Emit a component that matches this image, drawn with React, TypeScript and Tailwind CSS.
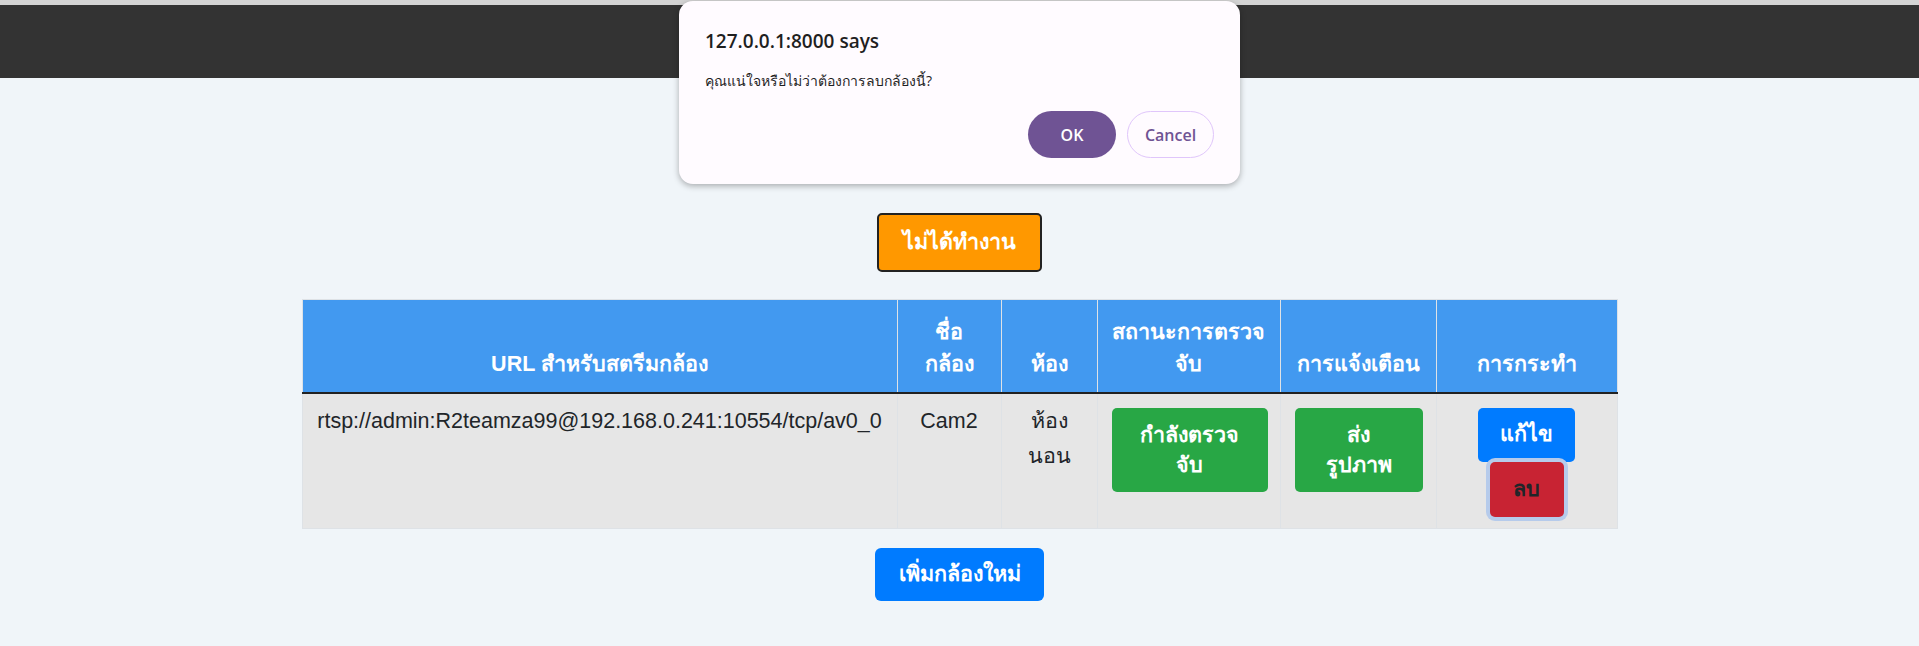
export default function App() {
  const th =
    "border border-[#dee2e6] border-b-2 border-b-[#222] align-bottom pb-3 px-[14px] text-center text-white font-bold text-[21.5px] leading-[32px]";
  const td = "border border-[#dee2e6] align-top text-center px-[14px]";

  return (
    <div
      className="relative h-[646px] overflow-hidden bg-[#f0f5f9] text-[#212529]"
      style={{ fontFamily: '"Liberation Sans", Arial, sans-serif' }}
    >
      <div className="h-[78px] border-t-[5px] border-[#d4d4d4] bg-[#333333]" />

      <main className="flex flex-col items-center">
        <button className="mt-[135px] h-[59px] w-[165px] rounded-[5px] border-2 border-[#222] bg-[#ff9800] text-[21.5px] font-bold text-white">
          ไม่ได้ทำงาน
        </button>

        <table className="mt-[27px] w-[1315px] table-fixed border-collapse">
          <thead>
            <tr className="bg-[#4299f0]">
              <th className={th + " w-[595px] h-[93px]"}>URL สำหรับสตรีมกล้อง</th>
              <th className={th + " w-[104px]"}>ชื่อ กล้อง</th>
              <th className={th + " w-[96px]"}>ห้อง</th>
              <th className={th + " w-[183px]"}>สถานะการตรวจ จับ</th>
              <th className={th + " w-[156px]"}>การแจ้งเตือน</th>
              <th className={th + " w-[181px]"}>การกระทำ</th>
            </tr>
          </thead>
          <tbody>
            <tr className="h-[136px] bg-[#e6e6e6] text-[21.5px]">
              <td className={td + " pt-[10px] leading-[35px]"}>
                rtsp://admin:R2teamza99@192.168.0.241:10554/tcp/av0_0
              </td>
              <td className={td + " pt-[10px] leading-[35px]"}>Cam2</td>
              <td className={td + " pt-[10px] leading-[35px]"}>
                ห้อง
                <br />
                นอน
              </td>
              <td className={td + " pt-[14px]"}>
                <button className="h-[84px] w-[156px] rounded-[5px] bg-[#28a745] px-3 text-[21.5px] font-bold leading-[30px] text-white">
                  กำลังตรวจ
                  <br />
                  จับ
                </button>
              </td>
              <td className={td + " pt-[14px]"}>
                <button className="h-[84px] w-[128px] rounded-[5px] bg-[#28a745] px-3 text-[21.5px] font-bold leading-[30px] text-white">
                  ส่ง
                  <br />
                  รูปภาพ
                </button>
              </td>
              <td className={td + " pt-[14px]"}>
                <div className="flex flex-col items-center">
                  <button className="h-[54px] w-[97px] rounded-[5px] bg-[#007bff] text-[21.5px] font-bold text-white">
                    แก้ไข
                  </button>
                  <button className="h-[55px] w-[74px] rounded-[5px] bg-[#c82333] text-[21.5px] font-bold text-[#212529] ring-4 ring-[#b6cbeb]">
                    ลบ
                  </button>
                </div>
              </td>
            </tr>
          </tbody>
        </table>

        <button className="mt-[19px] h-[53px] w-[169px] rounded-[6px] bg-[#007bff] text-[21.5px] font-bold text-white">
          เพิ่มกล้องใหม่
        </button>
      </main>

      <div
        className="absolute left-[679px] top-[1px] flex h-[183px] w-[561px] flex-col rounded-[14px] bg-[#fffbff] px-[26px] pt-[26px] shadow-[0_2px_6px_rgba(0,0,0,0.3)]"
        style={{ fontFamily: '"Open Sans", "Noto Sans", sans-serif' }}
      >
        <div className="text-[19px] font-semibold leading-[28px] text-[#1f1f1f]">
          127.0.0.1:8000 says
        </div>
        <div className="mt-[15px] text-[14px] leading-[22px] text-[#1f1f1f]">
          คุณแน่ใจหรือไม่ว่าต้องการลบกล้องนี้?
        </div>
        <div className="mt-[19px] flex justify-end gap-[11px]">
          <button className="h-[47px] w-[88px] rounded-full bg-[#6f5394] text-[16px] font-semibold text-white">
            OK
          </button>
          <button className="h-[47px] w-[87px] rounded-full border border-[#e0c6fb] bg-[#fffbff] text-[16px] font-semibold text-[#6f5394]">
            Cancel
          </button>
        </div>
      </div>
    </div>
  );
}
